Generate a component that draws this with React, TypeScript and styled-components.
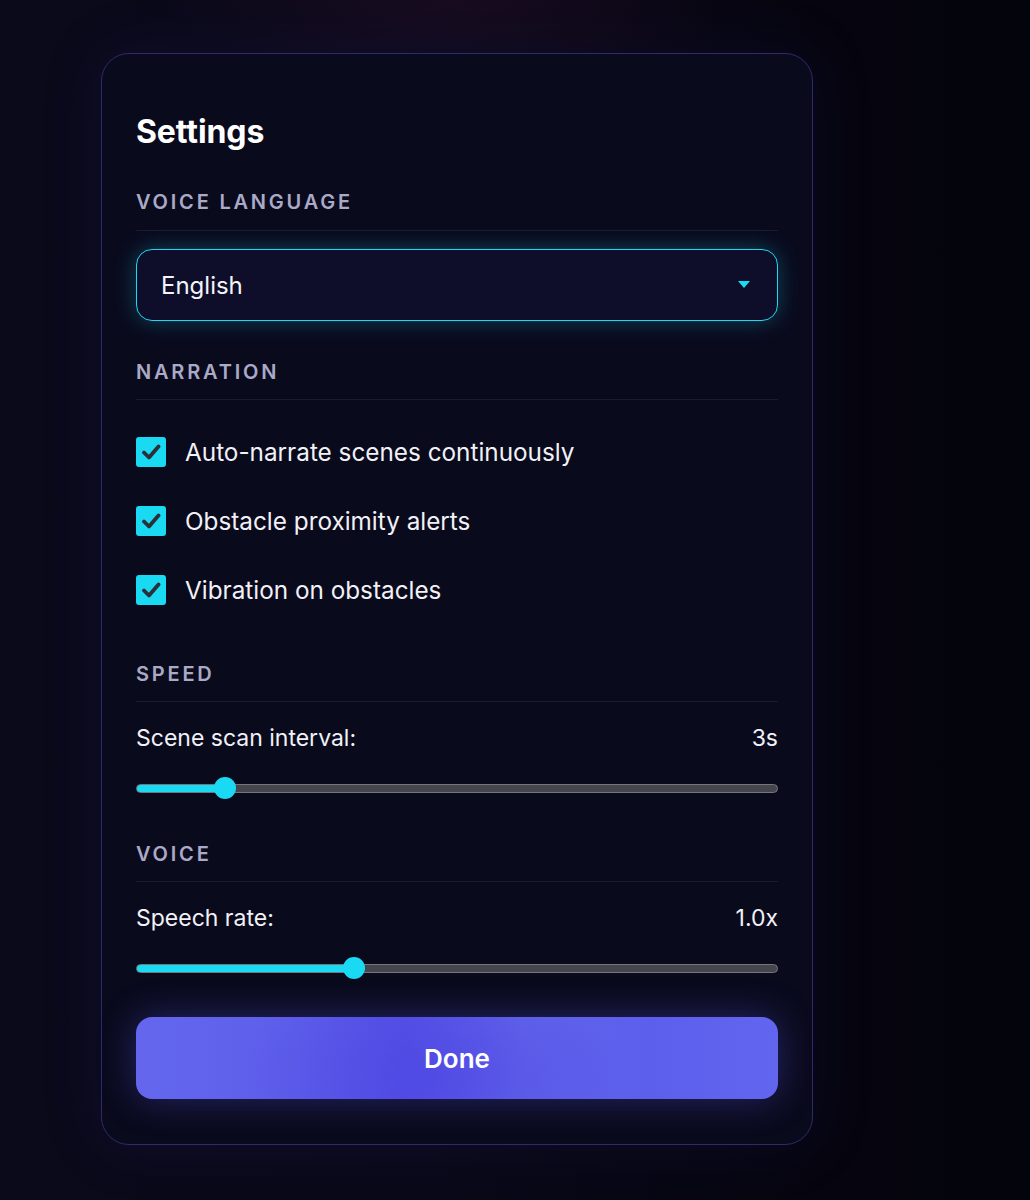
import React from "react";
import styled, { createGlobalStyle } from "styled-components";

const GlobalStyle = createGlobalStyle`
  html, body {
    margin: 0;
    padding: 0;
    background: #05050f;
  }
  body {
    font-family: Inter, "Noto Sans", "Liberation Sans", sans-serif;
    -webkit-font-smoothing: antialiased;
  }
  * { box-sizing: border-box; }
`;

const CYAN = "#1ad9f2";

const Page = styled.div`
  min-height: 1200px;
  padding: 53px 0 0 101px;
  background:
    radial-gradient(ellipse 420px 120px at 460px 0px, rgba(60, 20, 50, 0.3), transparent 70%),
    linear-gradient(90deg, #0b0a1b 0%, #0a0919 40%, #06050f 80%, #04040c 100%);
`;

const Card = styled.div`
  width: 712px;
  height: 1092px;
  display: flex;
  flex-direction: column;
  padding: 60px 34px 45px;
  border: 1px solid #2e2a70;
  border-radius: 28px;
  background: #0a0a1d;
  box-shadow: 0 0 60px rgba(40, 36, 110, 0.18);
`;

const Title = styled.h1`
  margin: 0 0 40px;
  font-size: 32px;
  line-height: 36px;
  font-weight: 700;
  color: #ffffff;
  letter-spacing: -0.1px;
`;

const Section = styled.section<{ $after: number }>`
  display: flex;
  flex-direction: column;
  margin-bottom: ${(p) => p.$after}px;
`;

const SectionLabel = styled.div<{ $pad: number }>`
  font-size: 20px;
  line-height: 24px;
  font-weight: 600;
  letter-spacing: 0.14em;
  text-transform: uppercase;
  color: #aaaac8;
  padding-bottom: ${(p) => p.$pad}px;
  border-bottom: 1px solid #1b1b35;
`;

const SectionBody = styled.div<{ $top: number }>`
  margin-top: ${(p) => p.$top}px;
  display: flex;
  flex-direction: column;
`;

const Select = styled.div`
  height: 72px;
  display: flex;
  align-items: center;
  justify-content: space-between;
  padding: 0 27px 0 24px;
  border: 1.5px solid ${CYAN};
  border-radius: 16px;
  background: #0e0e2a;
  box-shadow: 0 0 22px rgba(26, 217, 242, 0.28);
  color: #f4f4f8;
  font-size: 24px;
`;

const Caret = styled.svg`
  width: 12px;
  height: 8px;
  display: block;
`;

const CheckList = styled.div`
  display: flex;
  flex-direction: column;
  gap: 39px;
`;

const CheckRow = styled.label`
  display: flex;
  align-items: center;
  gap: 19px;
  height: 30px;
  font-size: 24.3px;
  line-height: 30px;
  color: #f1f1f6;
`;

const CheckBox = styled.span`
  width: 30px;
  height: 30px;
  flex: none;
  border-radius: 3px;
  background: ${CYAN};
  display: flex;
  align-items: center;
  justify-content: center;
`;

const ValueRow = styled.div`
  display: flex;
  justify-content: space-between;
  font-size: 23px;
  line-height: 30px;
  color: #f1f1f6;
`;

const SliderWrap = styled.div`
  position: relative;
  height: 22px;
  margin-top: 24px;
  display: flex;
  align-items: center;
`;

const Track = styled.div`
  width: 100%;
  height: 9px;
  border-radius: 5px;
  background: #45454e;
  border: 1px solid #75757f;
  overflow: hidden;
`;

const Fill = styled.div`
  height: 100%;
  background: ${CYAN};
`;

const Thumb = styled.div`
  position: absolute;
  top: 0;
  width: 22px;
  height: 22px;
  border-radius: 50%;
  background: ${CYAN};
  margin-left: -11px;
`;

const DoneButton = styled.button`
  height: 82px;
  width: 100%;
  border: none;
  border-radius: 16px;
  font-family: inherit;
  font-size: 26px;
  font-weight: 600;
  color: #ffffff;
  background:
    radial-gradient(ellipse 260px 140px at 290px 60px, rgba(76, 66, 226, 0.55), transparent 75%),
    linear-gradient(90deg, #6467ee 0%, #5d5eea 25%, #5451e6 42%, #6063ea 60%, #5c5fec 80%, #6265ee 100%);
  box-shadow: 0 0 36px rgba(88, 92, 240, 0.35);
`;

function Slider({ ratio }: { ratio: number }) {
  const thumbCenter = `calc(11px + (100% - 22px) * ${ratio})`;
  return (
    <SliderWrap>
      <Track>
        <Fill style={{ width: thumbCenter }} />
      </Track>
      <Thumb style={{ left: thumbCenter }} />
    </SliderWrap>
  );
}

function Check() {
  return (
    <CheckBox>
      <svg width="20" height="18" viewBox="0 0 20 18">
        <path
          d="M3 9.5 L8 14.5 L17.5 3.5"
          fill="none"
          stroke="#2b2f38"
          strokeWidth="3.8"
          strokeLinecap="round"
          strokeLinejoin="round"
        />
      </svg>
    </CheckBox>
  );
}

export default function App() {
  return (
    <>
      <GlobalStyle />
      <Page>
        <Card>
          <Title>Settings</Title>

          <Section $after={39}>
            <SectionLabel $pad={16}>Voice Language</SectionLabel>
            <SectionBody $top={18}>
              <Select>
                <span>English</span>
                <Caret viewBox="0 0 12 8">
                  <path d="M0 0 H12 L6 7 Z" fill={CYAN} />
                </Caret>
              </Select>
            </SectionBody>
          </Section>

          <Section $after={57}>
            <SectionLabel $pad={15}>Narration</SectionLabel>
            <SectionBody $top={37}>
              <CheckList>
                <CheckRow>
                  <Check />
                  Auto-narrate scenes continuously
                </CheckRow>
                <CheckRow>
                  <Check />
                  Obstacle proximity alerts
                </CheckRow>
                <CheckRow>
                  <Check />
                  Vibration on obstacles
                </CheckRow>
              </CheckList>
            </SectionBody>
          </Section>

          <Section $after={43}>
            <SectionLabel $pad={15}>Speed</SectionLabel>
            <SectionBody $top={21}>
              <ValueRow>
                <span>Scene scan interval:</span>
                <span>3s</span>
              </ValueRow>
              <Slider ratio={(3 - 2) / (10 - 2)} />
            </SectionBody>
          </Section>

          <Section $after={38}>
            <SectionLabel $pad={15}>Voice</SectionLabel>
            <SectionBody $top={21}>
              <ValueRow>
                <span>Speech rate:</span>
                <span>1.0x</span>
              </ValueRow>
              <Slider ratio={(1.0 - 0.5) / (2 - 0.5)} />
            </SectionBody>
          </Section>

          <DoneButton>Done</DoneButton>
        </Card>
      </Page>
    </>
  );
}
